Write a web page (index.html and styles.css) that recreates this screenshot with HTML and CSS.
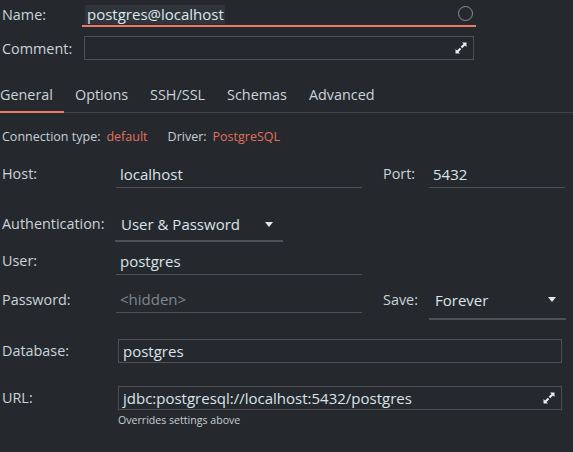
FILE: index.html
```html
<!DOCTYPE html>
<html>
<head>
<meta charset="utf-8">
<link rel="stylesheet" href="styles.css">
</head>
<body>
<div class="dialog">
  <div class="name-row">
    <span class="lbl">Name:</span>
    <div class="name-field">
      <span class="sel">postgres@localhost</span>
      <span class="circle"></span>
    </div>
  </div>
  <div class="comment-row">
    <span class="lbl">Comment:</span>
    <div class="box comment-box">
      <svg class="expand" width="12" height="12" viewBox="0 0 12 12"><path d="M7 0.5h4.5V5L10 3.5 7.2 6.3 5.7 4.8 8.5 2z M5 11.5H0.5V7L2 8.5 4.8 5.7 6.3 7.2 3.5 10z" fill="#e8ecf0"/></svg>
    </div>
  </div>

  <div class="tabs">
    <span class="tab active">General</span>
    <span class="tab">Options</span>
    <span class="tab">SSH/SSL</span>
    <span class="tab">Schemas</span>
    <span class="tab">Advanced</span>
  </div>

  <div class="info">
    <span class="k">Connection type:</span><span class="v">default</span>
    <span class="k k2">Driver:</span><span class="v">PostgreSQL</span>
  </div>

  <div class="form">
    <div class="row r-host">
      <span class="lbl">Host:</span>
      <div class="uline f-main"><span class="val">localhost</span></div>
      <span class="lbl lbl-right">Port:</span>
      <div class="uline f-port"><span class="val">5432</span></div>
    </div>

    <div class="row r-auth">
      <span class="lbl">Authentication:</span>
      <div class="combo f-auth"><span class="val">User &amp; Password</span><span class="arrow"></span></div>
    </div>

    <div class="row r-user">
      <span class="lbl">User:</span>
      <div class="uline f-main"><span class="val">postgres</span></div>
    </div>

    <div class="row r-pass">
      <span class="lbl">Password:</span>
      <div class="uline f-main f-pass"><span class="val hidden">&lt;hidden&gt;</span></div>
      <span class="lbl lbl-right">Save:</span>
      <div class="combo f-save"><span class="val">Forever</span><span class="arrow"></span></div>
    </div>

    <div class="row r-db">
      <span class="lbl">Database:</span>
      <div class="box f-box"><span class="val">postgres</span></div>
    </div>

    <div class="row r-url">
      <span class="lbl">URL:</span>
      <div class="box f-box">
        <span class="val">jdbc:postgresql://localhost:5432/postgres</span>
        <svg class="expand" width="12" height="12" viewBox="0 0 12 12"><path d="M7 0.5h4.5V5L10 3.5 7.2 6.3 5.7 4.8 8.5 2z M5 11.5H0.5V7L2 8.5 4.8 5.7 6.3 7.2 3.5 10z" fill="#e8ecf0"/></svg>
      </div>
    </div>
    <div class="note">Overrides settings above</div>
  </div>
</div>
</body>
</html>
```

FILE: styles.css
```css
html, body {
  margin: 0;
  padding: 0;
  background: #25292d;
  width: 573px;
  height: 452px;
  overflow: hidden;
}

.dialog {
  font-family: "Open Sans", "Noto Sans", sans-serif;
  font-size: 14px;
  color: #c9d1d9;
}

.lbl {
  color: #cbd3db;
  white-space: nowrap;
}

/* Name row */
.name-row {
  display: flex;
  align-items: center;
  height: 28px;
  padding-left: 2px;
}
.name-row .lbl { width: 80px; font-size: 14.4px; }
.name-field {
  width: 394px;
  height: 26px;
  border-bottom: 2px solid #ee7863;
  display: flex;
  align-items: center;
  justify-content: space-between;
  box-sizing: border-box;
}
.sel {
  background: #30353b;
  color: #dfe6ee;
  padding: 0 1px 0 2px;
  margin-left: 3px;
  line-height: 19px;
  margin-top: 2px;
  font-size: 15px;
}
.circle {
  width: 13px;
  height: 13px;
  border: 1.5px solid #8d9296;
  border-radius: 50%;
  margin-right: 3px;
  margin-top: 1px;
}

/* Comment */
.comment-row {
  display: flex;
  align-items: center;
  margin-top: 8px;
  padding-left: 2px;
}
.comment-row .lbl { width: 82px; font-size: 14.4px; }
.box {
  border: 1px solid #4b5157;
  box-sizing: border-box;
  display: flex;
  align-items: center;
  justify-content: space-between;
}
.comment-box {
  width: 390px;
  height: 24px;
  justify-content: flex-end;
  padding-right: 6px;
}

/* Tabs */
.tabs {
  display: flex;
  margin-top: 17px;
  height: 36px;
  border-bottom: 1px solid #3f4449;
  margin-left: -11px;
  box-sizing: border-box;
}
.tab {
  padding: 0 11px;
  display: flex;
  align-items: center;
  color: #cbd3db;
  font-size: 14.4px;
  border-bottom: 2px solid transparent;
  margin-bottom: -1px;
}
.tab.active {
  border-bottom-color: #ee7863;
}

/* Info line */
.info {
  padding-left: 2px;
  margin-top: 14px;
  font-size: 12.5px;
  height: 18px;
  display: flex;
  align-items: center;
}
.info .k { color: #c6ced6; }
.info .v { color: #e0705d; margin-left: 6px; }
.info .k2 { margin-left: 20px; }

/* Form */
.form {
  padding-left: 2px;
}
.row {
  display: flex;
  align-items: flex-start;
}
.row > .lbl:first-child {
  width: 114px;
}
.row .lbl { line-height: 26px; font-size: 14.4px; }
.lbl-right {
  margin-left: 21px;
  width: 46px;
}
.val {
  color: #dbe3eb;
  white-space: nowrap;
  font-size: 15px;
}
.hidden { color: #7f868d; }

.uline {
  height: 27px;
  border-bottom: 1px solid #4b5157;
  box-sizing: border-box;
  display: flex;
  align-items: center;
  padding-left: 4px;
}
.f-main { width: 246px; }
.f-port { width: 136px; }

.combo {
  height: 34px;
  border-bottom: 2px solid #4b5157;
  box-sizing: border-box;
  display: flex;
  align-items: center;
  justify-content: space-between;
  padding: 0 10px 0 6px;
}
.f-auth { width: 168px; margin-left: -1px; }
.f-save { width: 137px; padding-bottom: 5px; }
.arrow {
  width: 0;
  height: 0;
  border-left: 4.5px solid transparent;
  border-right: 4.5px solid transparent;
  border-top: 5px solid #e4e8ec;
}

.f-box {
  width: 444px;
  height: 24px;
  margin-left: 2px;
  padding: 0 6px 0 4px;
}

.r-host { margin-top: 16px; }
.r-auth { margin-top: 20px; }
.r-auth .lbl { line-height: 32px; }
.r-user { margin-top: 6px; }
.r-pass { margin-top: 11px; }
.r-pass .lbl { line-height: 28px; }
.r-db { margin-top: 19px; }
.r-db .lbl, .r-url .lbl { line-height: 24px; }
.r-url { margin-top: 23px; }

.note {
  margin-left: 116px;
  font-size: 10.6px;
  color: #c6ced6;
  margin-top: 3px;
}
```
